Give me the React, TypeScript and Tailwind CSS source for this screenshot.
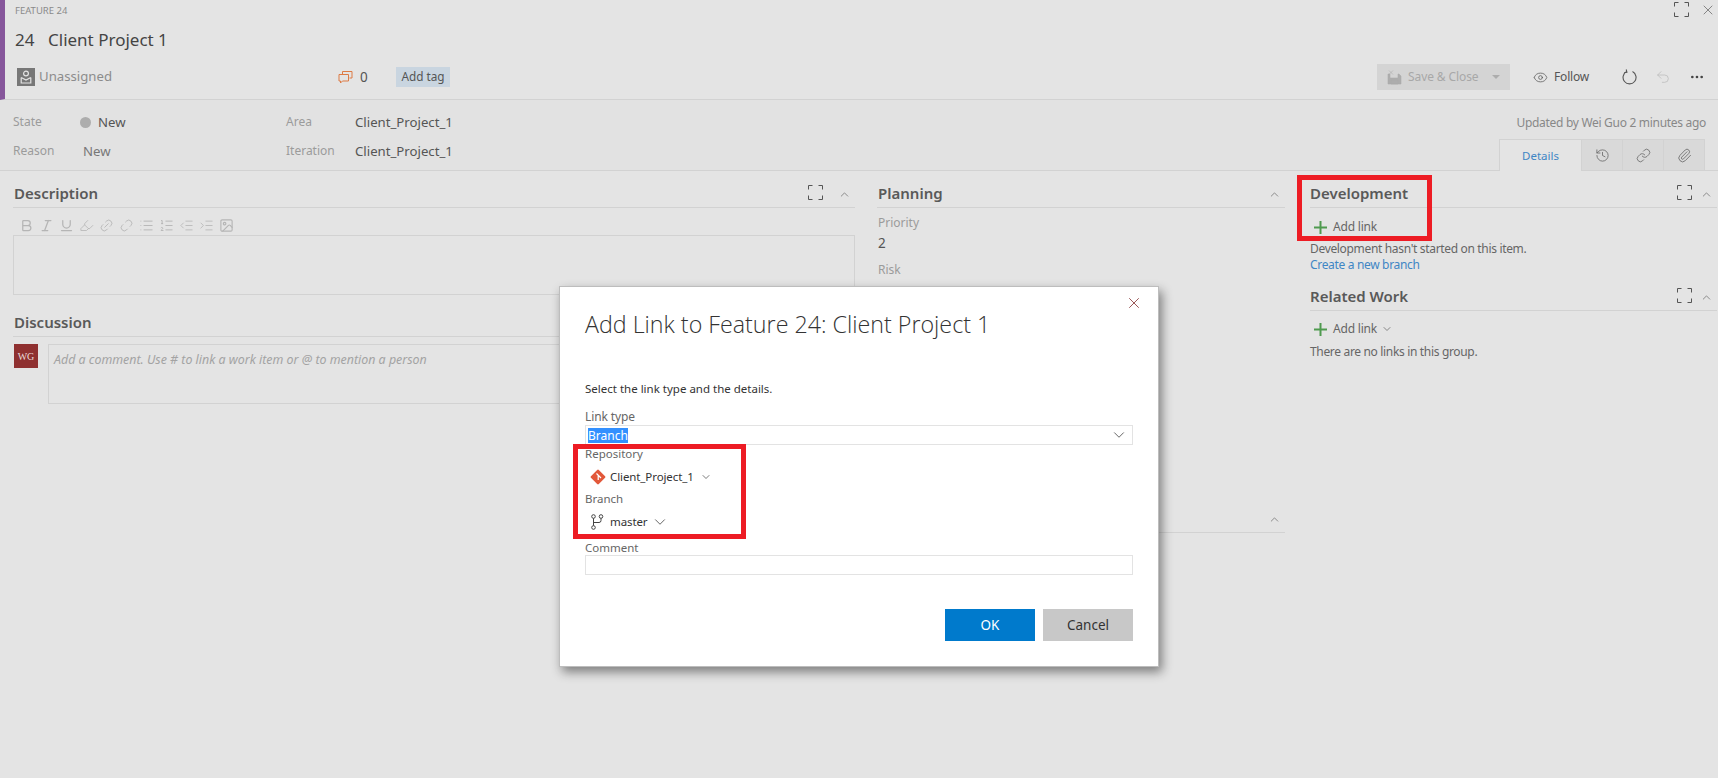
import React from "react";
import { Bold, Italic, Underline, Link2, Unlink2, List, ListOrdered, IndentDecrease, IndentIncrease, Image, ChevronUp, ChevronDown, Eye, Undo2, MoreHorizontal, X, History, Paperclip, Link, Highlighter } from "lucide-react";

const font = "font-['Noto_Sans','Open_Sans',sans-serif]";

function Expand({ className = "" }: { className?: string }) {
  return (
    <svg width="15" height="15" viewBox="0 0 15 15" fill="none" stroke="#555" strokeWidth="1" className={className}>
      <path d="M0.5 4.5V0.5H4.5M10.5 0.5H14.5V4.5M14.5 10.5V14.5H10.5M4.5 14.5H0.5V10.5" />
    </svg>
  );
}

function SectionHead({ title, expand = true, tight = false }: { title: string; expand?: boolean; tight?: boolean }) {
  return (
    <div className={`flex h-[30px] items-center border-b border-[#d2d2d2] ${tight ? "" : "pl-px"}`}>
      <span className="text-[15px] leading-[20px] font-semibold text-[#595959] grow">{title}</span>
      {expand && <Expand className={tight ? "mr-[8px]" : "mr-[15px]"} />}
      <ChevronUp size={13} className="text-[#777] mr-[4px] mt-[3px]" strokeWidth={1.5} />
    </div>
  );
}

function AddLink({ chevron = false }: { chevron?: boolean }) {
  return (
    <div className="flex items-center h-[20px] pl-[4px]">
      <svg width="13" height="13" viewBox="0 0 13 13" stroke="#4f9a4f" strokeWidth="2">
        <path d="M6.5 0V13M0 6.5H13" />
      </svg>
      <span className="ml-[6px] text-[12px] tracking-[-0.2px] text-[#666]">Add link</span>
      {chevron && <ChevronDown size={12} className="ml-[4px] text-[#666]" strokeWidth={1.5} />}
    </div>
  );
}

function BranchIcon() {
  return (
    <svg width="14" height="16" viewBox="0 0 14 16" fill="none" stroke="#444" strokeWidth="1">
      <circle cx="2.5" cy="2.5" r="1.8" />
      <circle cx="10" cy="2.5" r="1.8" />
      <circle cx="2.5" cy="13.5" r="1.8" />
      <path d="M2.5 4.3V11.7M10 4.3V6.5Q10 8.5 8 8.5H2.5" />
    </svg>
  );
}

function GitIcon() {
  return (
    <svg width="16" height="16" viewBox="0 0 16 16">
      <rect x="2.4" y="2.4" width="11.2" height="11.2" rx="1.2" fill="#e2583a" transform="rotate(45 8 8)" />
      <path d="M6.5 4.5L11 9M8.2 6.2V11" stroke="#fff" strokeWidth="1.2" fill="none" />
    </svg>
  );
}

function FieldLabel({ children, w }: { children: React.ReactNode; w: string }) {
  return <span className={`text-[12px] leading-[20px] text-[#9b9b9b] ${w}`}>{children}</span>;
}

export default function App() {
  const tb = "text-[#b5b5b5]";
  const small = "text-[12px] tracking-[-0.33px] text-[#666]";
  return (
    <div className={`${font} relative h-[778px] w-[1718px] overflow-hidden bg-[#e4e4e4] text-[#444]`}>
      {/* Header */}
      <header className="relative h-[100px] border-b border-[#d2d2d2] border-l-[5px] border-l-[#86569b] pl-[10px]">
        <div className="h-[19px] text-[9.5px] leading-[21px] text-[#8a8a8a]">FEATURE 24</div>
        <div className="mt-[8px] flex h-[26px] items-center text-[17px] text-[#444]">
          <span className="w-[33px]">24</span>
          <span>Client Project 1</span>
        </div>
        <div className="mt-[11px] flex h-[26px] items-center">
          <div className="ml-[2px] flex h-[18px] w-[18px] items-center justify-center bg-[#777]">
            <svg width="12" height="14" viewBox="0 0 12 14" fill="none" stroke="#e4e4e4" strokeWidth="1.2">
              <circle cx="6" cy="3.5" r="2.4" />
              <path d="M1.2 7.5V13H10.8V7.5M1.2 7.5L6 10L10.8 7.5" />
            </svg>
          </div>
          <span className="ml-[4px] w-[300px] text-[13.2px] text-[#8c8c8c]">Unassigned</span>
          <svg width="15" height="15" viewBox="0 0 15 15" fill="none" stroke="#dd7b45" strokeWidth="1" className="ml-[-1px]">
            <path d="M4.5 4.5V1.5H14V8H11.5M1 4.5H10.5V11H4.5L2.5 13V11H1Z" />
          </svg>
          <span className="ml-[7px] w-[36px] text-[13.5px] text-[#555]">0</span>
          <span className="flex h-[20px] w-[54px] items-center justify-center bg-[#c9d5e0] text-[11.8px] text-[#555]">Add tag</span>
          <div className="grow" />
          <div className="flex h-[26px] w-[133px] items-center bg-[#d4d4d4] pl-[10px] text-[12px] tracking-[-0.1px] text-[#a8a8a8]">
            <svg width="15" height="15" viewBox="0 0 15 15" fill="#adadad"><path d="M1 4h2v4h8V4h1l2 2v8H1ZM4 10h7v4H4ZM2 0.5l4 4M6 0.5l-4 4" stroke="#adadad" strokeWidth="0.6" /></svg>
            <span className="ml-[6px] grow">Save &amp; Close</span>
            <span className="mr-[10px] h-0 w-0 border-x-[4px] border-t-[4px] border-x-transparent border-t-[#adadad]" />
          </div>
          <Eye size={15} className="ml-[23px] text-[#555]" strokeWidth={1.2} />
          <span className="ml-[6px] text-[12px] tracking-[-0.2px] text-[#555]">Follow</span>
          <svg width="15" height="16" viewBox="0 0 15 16" fill="none" stroke="#555" strokeWidth="1.1" className="ml-[33px]">
            <path d="M4.6 2.6A6.5 6.5 0 1 0 10.5 2.6M4.2 0.5L4.9 3.2L2.2 3.6" />
          </svg>
          <Undo2 size={16} className="ml-[18px] text-[#bdbdbd]" strokeWidth={1.2} />
          <MoreHorizontal size={16} className="ml-[18px] mr-[13px] text-[#444]" strokeWidth={2} />
        </div>
        <Expand className="absolute right-[29px] top-[2px]" />
        <X size={16} className="absolute right-[2px] top-[2px] text-[#555]" strokeWidth={1} />
      </header>

      {/* Fields */}
      <section className="relative h-[71px] border-b border-[#d2d2d2] bg-[#e2e2e2] pl-[13px]">
        <div className="flex h-[32px] items-end">
          <FieldLabel w="w-[67px]">State</FieldLabel>
          <span className="mb-[4px] h-[11px] w-[11px] rounded-full bg-[#adadad]" />
          <span className="ml-[7px] w-[188px] text-[13.2px] leading-[20px] text-[#555]">New</span>
          <FieldLabel w="w-[69px]">Area</FieldLabel>
          <span className="text-[13.2px] leading-[20px] text-[#555]">Client_Project_1</span>
        </div>
        <div className="flex h-[29px] items-end">
          <FieldLabel w="w-[70px]">Reason</FieldLabel>
          <span className="w-[203px] text-[13.2px] leading-[20px] text-[#777]">New</span>
          <FieldLabel w="w-[69px]">Iteration</FieldLabel>
          <span className="text-[13.2px] leading-[20px] text-[#555]">Client_Project_1</span>
        </div>
        <div className="absolute right-[12px] top-[13px] text-[12px] tracking-[-0.3px] leading-[20px] text-[#888]">Updated by Wei Guo 2 minutes ago</div>
        <div className="absolute bottom-[-1px] right-[13px] flex h-[32px]">
          <div className="flex w-[83px] items-center justify-center border-x border-t border-[#d2d2d2] bg-[#e4e4e4] text-[11.5px] text-[#3f86c4]">Details</div>
          <div className="flex w-[41px] items-center justify-center border-t border-r border-b border-[#d2d2d2] bg-[#d9d9d9]"><History size={15} className="text-[#666]" strokeWidth={1.3} /></div>
          <div className="flex w-[41px] items-center justify-center border-t border-r border-b border-[#d2d2d2] bg-[#d9d9d9]"><Link size={15} className="text-[#666]" strokeWidth={1.3} /></div>
          <div className="flex w-[41px] items-center justify-center border-t border-r border-b border-[#d2d2d2] bg-[#d9d9d9]"><Paperclip size={15} className="text-[#666]" strokeWidth={1.3} /></div>
        </div>
      </section>

      {/* Body */}
      <main className="flex pl-[13px] pt-[7px]">
        <div className="w-[842px]">
          <SectionHead title="Description" />
          <div className="flex h-[27px] items-end gap-[5px] pb-[2px] pl-[6px]">
            <Bold size={15} className={tb} /><Italic size={15} className={tb} /><Underline size={15} className={tb} /><Highlighter size={15} className={tb} strokeWidth={1.3} /><Link2 size={15} className={`${tb} -rotate-45`} strokeWidth={1.3} /><Unlink2 size={15} className={`${tb} -rotate-45`} strokeWidth={1.3} /><List size={15} className={tb} strokeWidth={1.5} /><ListOrdered size={15} className={tb} strokeWidth={1.5} /><IndentDecrease size={15} className={tb} strokeWidth={1.3} /><IndentIncrease size={15} className={tb} strokeWidth={1.3} /><Image size={15} className={tb} strokeWidth={1.8} />
          </div>
          <div className="h-[60px] border border-[#d2d2d2]" />
          <div className="mt-[12px]"><SectionHead title="Discussion" expand={false} /></div>
          <div className="mt-[7px] flex">
            <div className="ml-px flex h-[24px] w-[24px] items-center justify-center bg-[#8f3030] font-['Liberation_Serif',serif] text-[10px] text-[#e8d8d8]">WG</div>
            <div className="ml-[10px] h-[60px] grow border border-[#d2d2d2] px-[5px] py-[4px] text-[12.4px] italic leading-[22px] text-[#a3a3a3]">Add a comment. Use # to link a work item or @ to mention a person</div>
          </div>
        </div>

        <div className="ml-[22px] w-[408px]">
          <SectionHead title="Planning" expand={false} />
          <div className="mt-[5px] pl-px text-[12px] leading-[20px] text-[#9b9b9b]">Priority</div>
          <div className="pl-px text-[13.5px] leading-[20px] text-[#555]">2</div>
          <div className="mt-[7px] pl-px text-[12px] leading-[20px] text-[#9b9b9b]">Risk</div>
          <div className="mt-[223px]"><SectionHead title="" expand={false} /></div>
        </div>

        <div className="ml-[25px] w-[407px]">
          <SectionHead title="Development" tight />
          <div className="mt-[9px]"><AddLink /></div>
          <div className={`mt-[3px] leading-[17px] ${small}`}>Development hasn't started on this item.</div>
          <div className="text-[12px] tracking-[-0.33px] leading-[16px] text-[#3f86c4]">Create a new branch</div>
          <div className="mt-[8px]"><SectionHead title="Related Work" tight /></div>
          <div className="mt-[8px]"><AddLink chevron /></div>
          <div className={`mt-[4px] leading-[18px] ${small}`}>There are no links in this group.</div>
        </div>
      </main>

      {/* Modal */}
      <div className="absolute left-[559px] top-[286px] h-[381px] w-[600px] border border-[#bdbdbd] bg-white px-[25px] shadow-[3px_5px_10px_rgba(0,0,0,0.45)]">
        <X size={18} strokeWidth={1} className="absolute right-[15px] top-[7px] text-[#7a2020]" />
        <h1 className="mt-[19px] font-['Open_Sans',sans-serif] text-[23.25px] font-light leading-[36px] text-[#333]">Add Link to Feature 24: Client Project 1</h1>
        <p className="mt-[39px] text-[11.5px] leading-[16px] text-[#333]">Select the link type and the details.</p>
        <div className="mt-[12px] text-[12px] tracking-[-0.1px] leading-[16px] text-[#666]">Link type</div>
        <div className="flex h-[20px] items-center border border-[#e3e3e3] pl-[2px] pr-[4px]">
          <span className="bg-[#3390ff] text-[12px] leading-[15px] text-white">Branch</span>
          <span className="grow" />
          <ChevronDown size={18} strokeWidth={1} className="text-[#333]" />
        </div>
        <div className="text-[11.5px] leading-[18px] text-[#666]">Repository</div>
        <div className="mt-[3px] flex h-[22px] items-center pl-[5px]">
          <GitIcon />
          <span className="ml-[4px] text-[11.5px] tracking-[-0.1px] text-[#333]">Client_Project_1</span>
          <ChevronDown size={12} strokeWidth={1.3} className="ml-[6px] text-[#333]" />
        </div>
        <div className="mt-[2px] text-[11.5px] leading-[18px] text-[#666]">Branch</div>
        <div className="mt-[3px] flex h-[22px] items-center pl-[6px]">
          <BranchIcon />
          <span className="ml-[5px] text-[11.5px] tracking-[-0.1px] text-[#333]">master</span>
          <ChevronDown size={18} strokeWidth={1} className="ml-[3px] text-[#333]" />
        </div>
        <div className="mt-[7px] text-[11.5px] leading-[15px] text-[#666]">Comment</div>
        <div className="h-[20px] border border-[#e3e3e3]" />
        <div className="mt-[34px] flex justify-end gap-[8px]">
          <button className="h-[32px] w-[90px] bg-[#007acc] text-[13.5px] text-white">OK</button>
          <button className="h-[32px] w-[90px] bg-[#c8c8c8] text-[13.5px] text-[#333]">Cancel</button>
        </div>
      </div>

      {/* Red annotations */}
      <div className="absolute left-[1297px] top-[175px] h-[66px] w-[135px] border-[5px] border-[#ed1c24]" />
      <div className="absolute left-[573px] top-[444px] h-[95px] w-[173px] border-[5px] border-[#ed1c24]" />
    </div>
  );
}
